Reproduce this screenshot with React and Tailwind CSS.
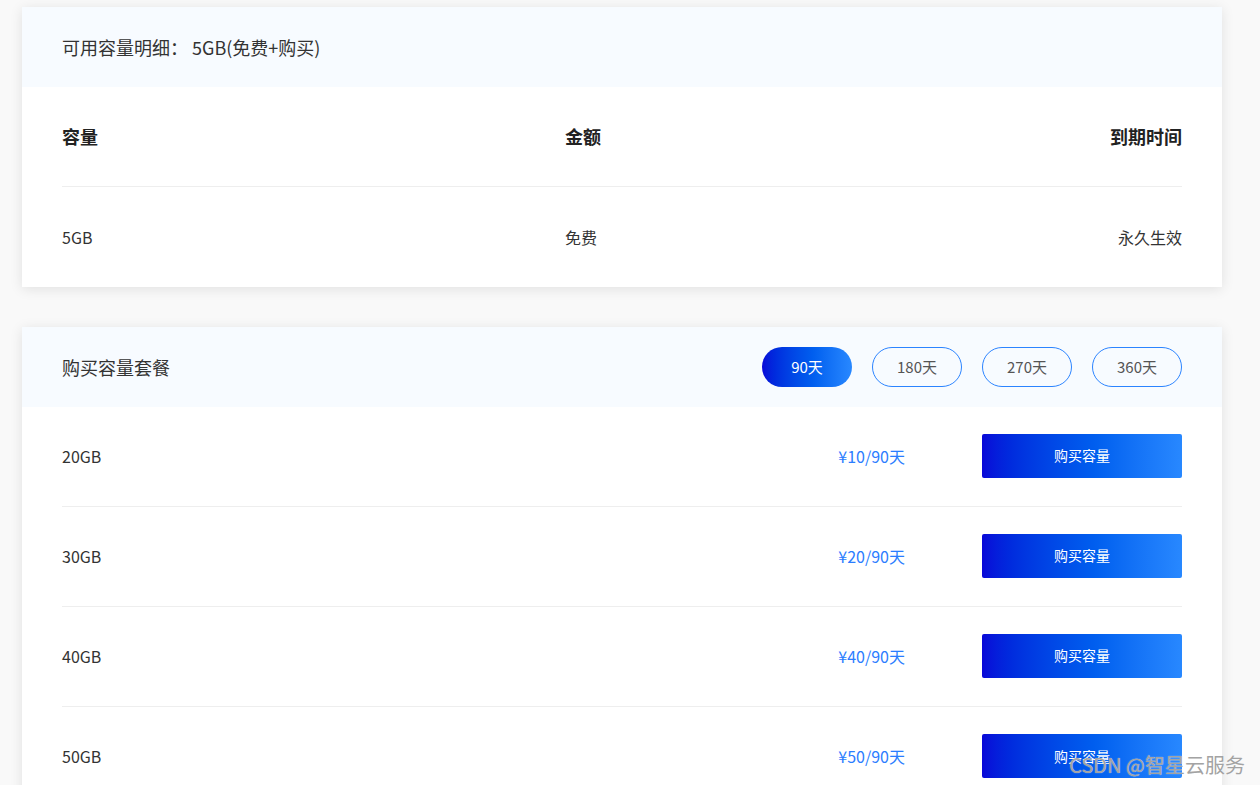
const plans = [
  { size: '20GB', price: '¥10/90天' },
  { size: '30GB', price: '¥20/90天' },
  { size: '40GB', price: '¥40/90天' },
  { size: '50GB', price: '¥50/90天' },
];

const periods = ['90天', '180天', '270天', '360天'];

export default function App() {
  return (
    <div
      className="relative min-h-[785px] h-[785px] overflow-hidden bg-[#f9f9f9] pt-[7px] text-[#333]"
      style={{ fontFamily: '"Noto Sans CJK SC", "Noto Sans", sans-serif' }}
    >
      <div className="ml-[22px] w-[1200px] bg-white shadow-[0_2px_12px_rgba(0,0,0,0.1)]">
        <div className="flex h-[80px] items-center bg-[#f7fbff] px-10 text-[18px]">
          <span>可用容量明细：</span>
          <span className="ml-[4px]">5GB(免费+购买)</span>
        </div>
        <div className="px-10">
          <div className="grid h-[100px] grid-cols-[503px_1fr_1fr] items-center border-b border-[#eeeeee] text-[18px] font-bold text-[#222]">
            <div>容量</div>
            <div>金额</div>
            <div className="text-right">到期时间</div>
          </div>
          <div className="grid h-[100px] grid-cols-[503px_1fr_1fr] items-center text-[16px]">
            <div>5GB</div>
            <div>免费</div>
            <div className="text-right">永久生效</div>
          </div>
        </div>
      </div>

      <div className="ml-[22px] mt-[40px] w-[1200px] bg-white shadow-[0_2px_12px_rgba(0,0,0,0.1)]">
        <div className="flex h-[80px] items-center justify-between bg-[#f7fbff] px-10">
          <span className="text-[18px]">购买容量套餐</span>
          <div className="flex gap-5">
            {periods.map((p, i) =>
              i === 0 ? (
                <button
                  key={p}
                  className="h-10 w-[90px] rounded-full bg-gradient-to-r from-[#0a06d8] to-[#2888ff] text-[15px] text-white"
                >
                  {p}
                </button>
              ) : (
                <button
                  key={p}
                  className="h-10 w-[90px] rounded-full border border-[#2b84ff] bg-transparent text-[15px] text-[#555]"
                >
                  {p}
                </button>
              )
            )}
          </div>
        </div>
        <div className="px-10">
          {plans.map((plan, i) => (
            <div
              key={plan.size}
              className={`flex h-[100px] items-center pb-[2px] ${i < plans.length - 1 ? 'border-b border-[#eeeeee]' : ''}`}
            >
              <span className="flex-1 text-[16px]">{plan.size}</span>
              <span className="mr-[77px] text-[16px] text-[#2b7dff]">{plan.price}</span>
              <button className="h-11 w-[200px] rounded-[2px] bg-gradient-to-r from-[#0a06d8] to-[#2888ff] text-[14px] text-white">
                购买容量
              </button>
            </div>
          ))}
        </div>
      </div>

      <div className="absolute bottom-[5px] right-[15px] text-[20px] font-normal text-[#a3a3a3] [text-shadow:0_0_1px_rgba(255,255,255,0.8)]">
        CSDN @智星云服务
      </div>
    </div>
  );
}
